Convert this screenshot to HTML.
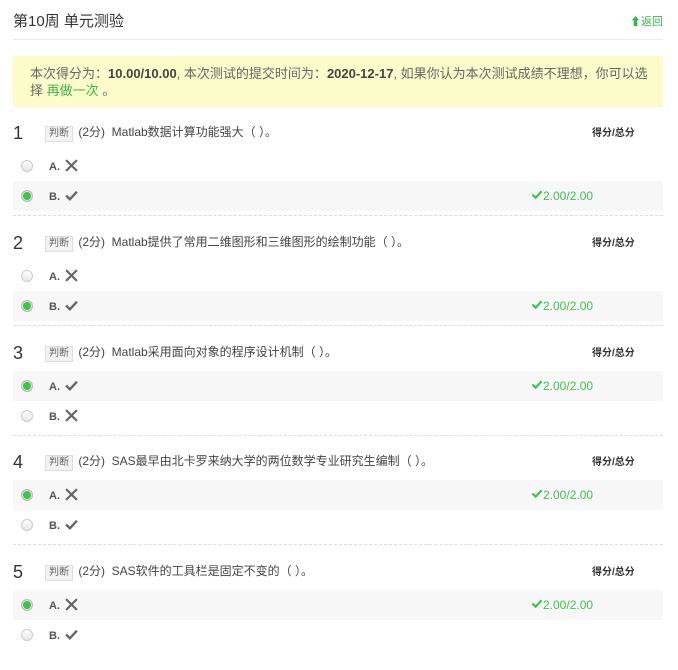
<!DOCTYPE html>
<html><head><meta charset="utf-8"><style>
body{margin:0;background:#fff;font-family:"Liberation Sans","Noto Sans CJK SC",sans-serif;color:#333;width:678px;height:655px;overflow:hidden;position:relative}
.abs{position:absolute}
.title{left:13px;top:10px;font-size:15px;color:#333}
.back{right:15px;top:13px;font-size:11px;color:#39b54a}
.hr{left:13px;top:39px;width:650px;height:1px;background:#eaeaea}
.note{left:13px;top:56px;width:650px;height:51px;background:#fbfcc9}
.note p{margin:0;position:absolute;left:17px;top:9px;width:620px;font-size:13px;line-height:17px;color:#666}
.note b{color:#444}
.q{left:13px;width:650px;height:110px}
.num{position:absolute;left:0;top:2px;font-size:18px;color:#333}
.hd{position:absolute;left:32px;top:2px;font-size:12px;color:#444}
.tag{display:inline-block;border:1px solid #ddd;background:#f2f2f2;font-size:10px;padding:0 3px;line-height:14px;color:#666;margin-right:2px}
.sc{position:absolute;left:579px;top:3px;font-size:10px;font-weight:bold;color:#333}
.opt{position:absolute;left:0;width:650px;height:30px}
.opt.sel{background:#f7f7f7}
.radio{position:absolute;left:8px;top:9px;width:10px;height:10px;border-radius:50%;border:1px solid #ccc;background:linear-gradient(#fff,#e6e6e6)}
.sel .radio{background:#3ec34c;border-color:#bbb;box-shadow:inset 0 0 0 1px #e6e6e6}
.lab{position:absolute;left:36px;top:10px;font-size:11px;color:#555;font-weight:bold}
.ic{position:absolute;left:52px;top:8px}
.pts{position:absolute;left:518px;top:8px;font-size:12px;color:#3ec34c}
.dash{position:absolute;left:0;top:94px;width:650px;border-top:1px dashed #ddd}
</style></head><body>
<div class="abs title">第10周 单元测验</div>
<div class="abs back">⬆返回</div>
<div class="abs hr"></div>
<div class="abs note"><p>本次得分为：<b>10.00/10.00</b>, 本次测试的提交时间为：<b>2020-12-17</b>, 如果你认为本次测试成绩不理想，你可以选择 <span style="color:#39b54a">再做一次</span> 。</p></div>

<svg width="0" height="0" style="position:absolute"><defs>
<symbol id="x" viewBox="0 0 12 12"><path d="M1 1L11 11M11 1L1 11" stroke="#666" stroke-width="2"/></symbol>
<symbol id="v" viewBox="0 0 12 12"><path d="M1 6L4.5 9.5L11 2.5" stroke="#666" stroke-width="2.2" fill="none"/></symbol>
<symbol id="g" viewBox="0 0 12 12"><path d="M1 6L4.5 9.5L11 2.5" stroke="#3ec34c" stroke-width="2.4" fill="none"/></symbol>
</defs></svg>

<div class="abs q" style="top:121px">
<div class="num">1</div><div class="hd"><span class="tag">判断</span> (2分)&nbsp; Matlab数据计算功能强大（ ）。</div><div class="sc">得分/总分</div>
<div class="opt" style="top:30px"><div class="radio"></div><div class="lab">A.</div><svg class="ic" width="13" height="13"><use href="#x"/></svg></div>
<div class="opt sel" style="top:60px"><div class="radio"></div><div class="lab">B.</div><svg class="ic" width="13" height="13"><use href="#v"/></svg><div class="pts"><svg width="12" height="11"><use href="#g"/></svg>2.00/2.00</div></div>
<div class="dash"></div></div>

<div class="abs q" style="top:231px">
<div class="num">2</div><div class="hd"><span class="tag">判断</span> (2分)&nbsp; Matlab提供了常用二维图形和三维图形的绘制功能（ ）。</div><div class="sc">得分/总分</div>
<div class="opt" style="top:30px"><div class="radio"></div><div class="lab">A.</div><svg class="ic" width="13" height="13"><use href="#x"/></svg></div>
<div class="opt sel" style="top:60px"><div class="radio"></div><div class="lab">B.</div><svg class="ic" width="13" height="13"><use href="#v"/></svg><div class="pts"><svg width="12" height="11"><use href="#g"/></svg>2.00/2.00</div></div>
<div class="dash"></div></div>

<div class="abs q" style="top:341px">
<div class="num">3</div><div class="hd"><span class="tag">判断</span> (2分)&nbsp; Matlab采用面向对象的程序设计机制（ ）。</div><div class="sc">得分/总分</div>
<div class="opt sel" style="top:30px"><div class="radio"></div><div class="lab">A.</div><svg class="ic" width="13" height="13"><use href="#v"/></svg><div class="pts"><svg width="12" height="11"><use href="#g"/></svg>2.00/2.00</div></div>
<div class="opt" style="top:60px"><div class="radio"></div><div class="lab">B.</div><svg class="ic" width="13" height="13"><use href="#x"/></svg></div>
<div class="dash"></div></div>

<div class="abs q" style="top:450px">
<div class="num">4</div><div class="hd"><span class="tag">判断</span> (2分)&nbsp; SAS最早由北卡罗来纳大学的两位数学专业研究生编制（ ）。</div><div class="sc">得分/总分</div>
<div class="opt sel" style="top:30px"><div class="radio"></div><div class="lab">A.</div><svg class="ic" width="13" height="13"><use href="#x"/></svg><div class="pts"><svg width="12" height="11"><use href="#g"/></svg>2.00/2.00</div></div>
<div class="opt" style="top:60px"><div class="radio"></div><div class="lab">B.</div><svg class="ic" width="13" height="13"><use href="#v"/></svg></div>
<div class="dash"></div></div>

<div class="abs q" style="top:560px">
<div class="num">5</div><div class="hd"><span class="tag">判断</span> (2分)&nbsp; SAS软件的工具栏是固定不变的（ ）。</div><div class="sc">得分/总分</div>
<div class="opt sel" style="top:30px"><div class="radio"></div><div class="lab">A.</div><svg class="ic" width="13" height="13"><use href="#x"/></svg><div class="pts"><svg width="12" height="11"><use href="#g"/></svg>2.00/2.00</div></div>
<div class="opt" style="top:60px"><div class="radio"></div><div class="lab">B.</div><svg class="ic" width="13" height="13"><use href="#v"/></svg></div>
</div>
</body></html>
